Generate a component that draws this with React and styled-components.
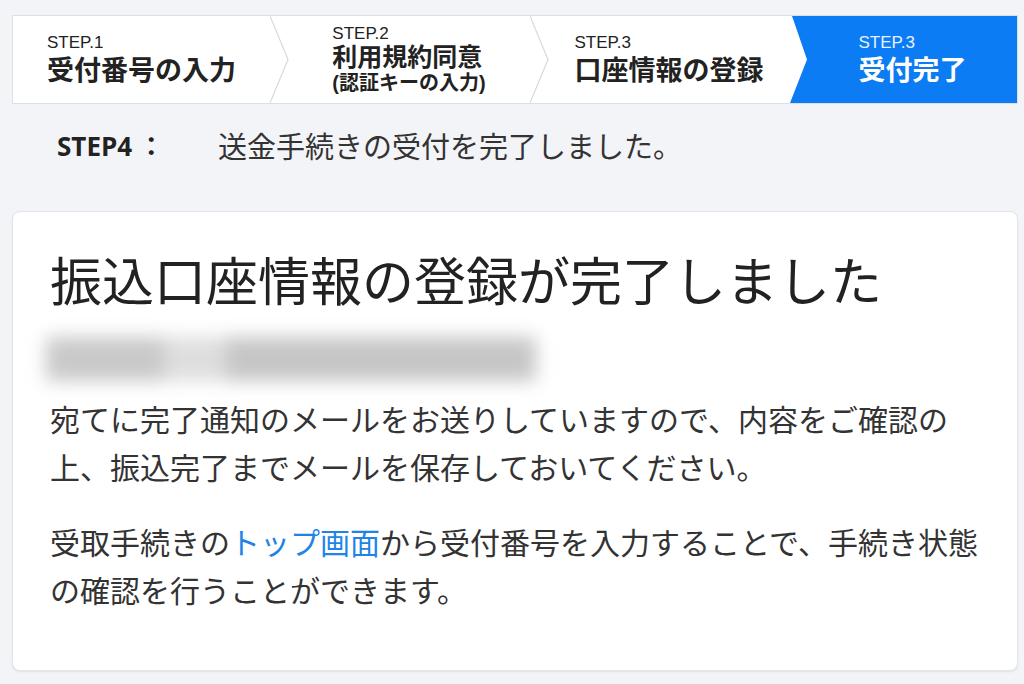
import React from 'react';
import styled, { createGlobalStyle } from 'styled-components';

const GlobalStyle = createGlobalStyle`
  html, body {
    margin: 0;
    padding: 0;
    background: #f3f4f8;
  }
  body {
    font-family: "Noto Sans CJK JP", sans-serif;
    color: #333;
  }
`;

const Page = styled.div`
  padding: 15px 6px 13px 12px;
  min-height: 684px;
  box-sizing: border-box;
`;

const Stepper = styled.div`
  display: flex;
  height: 89px;
  box-sizing: border-box;
  border: 1px solid #dcdfe4;
  background: #fff;
`;

const Step = styled.div`
  position: relative;
  flex: ${(p) => (p.$width ? `0 0 ${p.$width}px` : '1 1 auto')};
  display: flex;
  align-items: center;
  justify-content: center;
  padding-left: ${(p) => (p.$first ? 0 : 18)}px;
  box-sizing: border-box;
  background: ${(p) => (p.$active ? '#0b7cf3' : 'transparent')};
  clip-path: ${(p) =>
    p.$active ? 'polygon(2px 0, 100% 0, 100% 100%, 0 100%, 17px 50%)' : 'none'};
  color: ${(p) => (p.$active ? '#fff' : '#222')};
  font-family: "Liberation Sans", "Noto Sans CJK JP", sans-serif;
`;

const Separator = styled.svg`
  position: absolute;
  top: 0;
  left: 100%;
  width: 19px;
  height: 100%;
  z-index: 1;
`;

const StepText = styled.div`
  display: flex;
  flex-direction: column;
  align-items: flex-start;
`;

const StepLabel = styled.span`
  font-size: 17px;
  line-height: ${(p) => (p.$tight ? 18 : 22)}px;
  color: ${(p) => (p.$active ? '#e8f1ff' : '#222')};
`;

const StepTitle = styled.span`
  font-size: ${(p) => (p.$small ? 25 : 27)}px;
  line-height: ${(p) => (p.$small ? 28 : 34)}px;
  font-weight: 700;
`;

const StepSub = styled.span`
  font-size: 20px;
  line-height: 24px;
  font-weight: 700;
`;

const Heading = styled.div`
  display: flex;
  align-items: center;
  height: 40px;
  margin: 21px 0 46px;
  padding-left: 45px;
`;

const HeadingLabel = styled.span`
  min-width: 161px;
  font-family: "Open Sans", "Noto Sans CJK JP", sans-serif;
  font-weight: 700;
  font-size: 26px;
  color: #222;
`;

const Colon = styled.span`
  margin-left: 6px;
`;

const HeadingText = styled.span`
  font-size: 29px;
  color: #333;
`;

const Card = styled.div`
  background: #fff;
  border: 1px solid #e3e5ea;
  border-radius: 8px;
  box-shadow: 0 1px 2px rgba(0, 0, 0, 0.08);
  padding: 33px 35px 56px 37px;
  height: 460px;
  box-sizing: border-box;
`;

const Title = styled.h1`
  margin: 0;
  font-size: 52px;
  line-height: 68px;
  font-weight: 400;
  color: #222;
`;

const BlurRow = styled.div`
  display: flex;
  height: 44px;
  margin: 24px 0 13px -4px;
  filter: blur(9px);
`;

const Blob = styled.span`
  flex: 0 0 ${(p) => p.$w}px;
  background: ${(p) => p.$c};
`;

const Paragraph = styled.p`
  margin: 0 0 27px;
  font-size: 30px;
  line-height: 48px;
  color: #333;
`;

const Link = styled.a`
  color: #1f84e6;
  text-decoration: none;
`;

const steps = [
  { label: 'STEP.1', title: '受付番号の入力', width: 257 },
  { label: 'STEP.2', title: '利用規約同意', sub: '(認証キーの入力)', width: 260 },
  { label: 'STEP.3', title: '口座情報の登録', width: 260 },
  { label: 'STEP.3', title: '受付完了', active: true },
];

export default function App() {
  return (
    <>
      <GlobalStyle />
      <Page>
        <Stepper>
          {steps.map((s, i) => (
            <Step key={i} $width={s.width} $first={i === 0} $active={s.active}>
              <StepText>
                <StepLabel $active={s.active} $tight={!!s.sub}>{s.label}</StepLabel>
                <StepTitle $small={!!s.sub}>{s.title}</StepTitle>
                {s.sub && <StepSub>{s.sub}</StepSub>}
              </StepText>
              {i < 2 && (
                <Separator viewBox="0 0 19 87" preserveAspectRatio="none">
                  <polygon points="0,0 18,43.5 0,87" fill="#fff" />
                  <polyline points="0,0 18,43.5 0,87" fill="none" stroke="#d6d9de" strokeWidth="1.2" />
                </Separator>
              )}
            </Step>
          ))}
        </Stepper>

        <Heading>
          <HeadingLabel>STEP4<Colon>：</Colon></HeadingLabel>
          <HeadingText>送金手続きの受付を完了しました。</HeadingText>
        </Heading>

        <Card>
          <Title>振込口座情報の登録が完了しました</Title>
          <BlurRow>
            <Blob $w={118} $c="#c9c9c9" />
            <Blob $w={62} $c="#dedede" />
            <Blob $w={310} $c="#c6c6c6" />
          </BlurRow>
          <Paragraph>
            宛てに完了通知のメールをお送りしていますので、内容をご確認の上、振込完了までメールを保存しておいてください。
          </Paragraph>
          <Paragraph>
            受取手続きの<Link href="#">トップ画面</Link>から受付番号を入力することで、手続き状態の確認を行うことができます。
          </Paragraph>
        </Card>
      </Page>
    </>
  );
}
